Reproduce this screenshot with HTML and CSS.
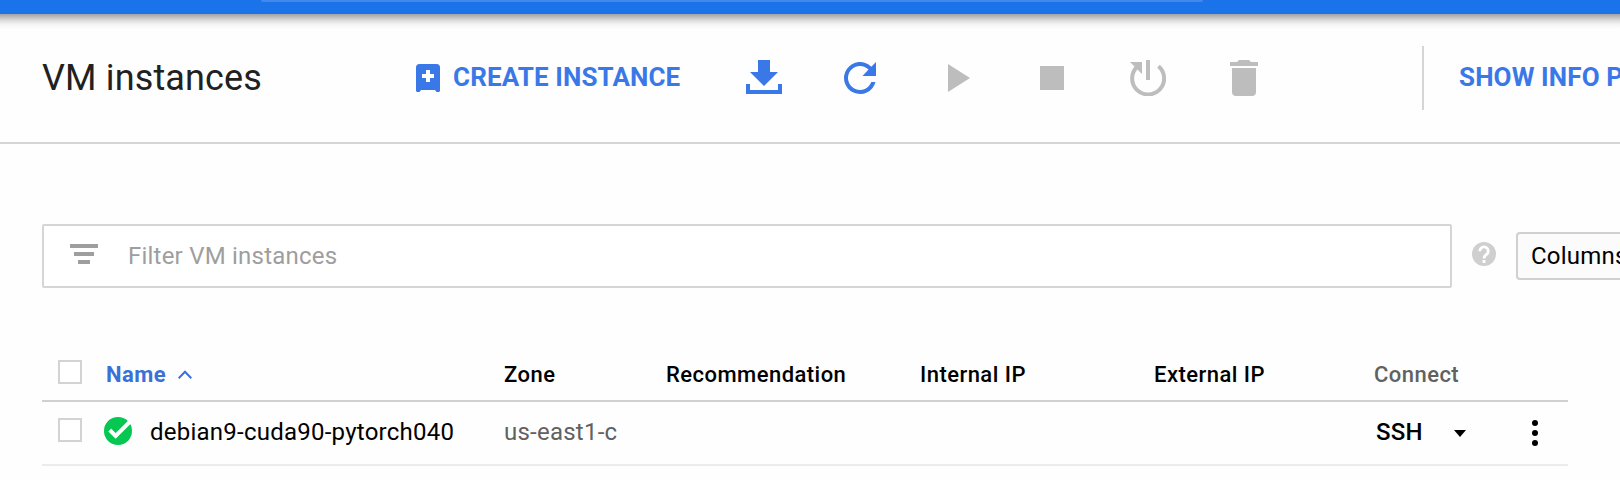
FILE: index.html
```
<!DOCTYPE html>
<html lang="en">
<head>
<meta charset="utf-8">
<title>VM instances</title>
<link rel="stylesheet" href="styles.css">
</head>
<body>
<div class="topbar"><div class="search"></div></div>
<header class="toolbar">
  <h1 class="title">VM instances</h1>
  <button class="create">
    <svg class="create-icon" viewBox="0 0 24 28"><path fill="currentColor" fill-rule="evenodd" d="M3.500 0h17A3.500 3.500 0 0 1 24 3.500V26.500a1.500 1.500 0 0 1-1.500 1.500h-2L19 26H5l-1.500 2h-2A1.500 1.500 0 0 1 0 26.500V3.500A3.500 3.500 0 0 1 3.500 0zM10 6v4H6v4h4v4h4v-4h4v-4h-4V6z"/></svg>
    <span class="create-text">CREATE INSTANCE</span>
  </button>
  <nav class="actions">
    <svg class="icon blue" viewBox="0 0 36 36"><path d="M12 0h12v12h8L18 26 4 12h8zM0 24h4v6h28v-6h4v10H0z"/></svg>
    <svg class="icon blue" viewBox="0 0 36 36"><path d="M29.300 6.700A16 16 0 1 0 33.500 22h-4.200A12 12 0 1 1 26.500 9.500L20.500 16H34V2z"/></svg>
    <svg class="icon grey" viewBox="0 0 36 36"><path d="M10 4v28l22-14z"/></svg>
    <svg class="icon grey" viewBox="0 0 36 36"><path d="M6 6h24v24H6z"/></svg>
    <svg class="icon" viewBox="0 0 36 36"><path fill="#bdbdbd" d="M16 0h4v20h-4zM0 2h12v12z"/><path fill="none" stroke="#bdbdbd" stroke-width="4" d="M7.500 6.500A16 16 0 1 0 28.500 6.300"/></svg>
    <svg class="icon grey" viewBox="0 0 36 36"><path d="M4 2h7l2-2h10l2 2h7v4H4zM6 8h24v24a4 4 0 0 1-4 4H10a4 4 0 0 1-4-4z"/></svg>
  </nav>
  <div class="info"><span class="info-text">SHOW INFO PANEL</span></div>
</header>
<main class="content">
  <div class="filter-row">
    <div class="filter">
      <svg class="filter-icon" viewBox="0 0 28 20"><path fill="#9e9e9e" d="M0 0h28v4H0zM4 8h20v4H4zM8 16h12v4H8z"/></svg>
      <span class="placeholder">Filter VM instances</span>
    </div>
    <svg class="help" viewBox="0 0 24 24"><circle cx="12" cy="12" r="12" fill="#cfcfcf"/><path fill="none" stroke="#fff" stroke-width="2.900" d="M7.800 9.300a4.200 4.200 0 1 1 6.800 3.100C13 13.600 12 14.100 12 16.500"/><path fill="#fff" d="M10.500 18h3v3h-3z"/></svg>
    <button class="columns">Columns</button>
  </div>
  <section class="table">
    <div class="row head">
      <span class="check"></span>
      <span class="name-head"><span class="name-label">Name</span><svg class="sort" viewBox="0 0 14 9"><path fill="none" stroke="#3b70d6" stroke-width="2" d="M.7 8.200 7 1.700l6.300 6.500"/></svg></span>
      <span>Zone</span><span>Recommendation</span><span>Internal IP</span><span>External IP</span><span class="connect">Connect</span>
    </div>
    <div class="row item">
      <span class="check"></span>
      <span class="vm">
        <svg class="status" viewBox="0 0 28 28"><circle cx="14" cy="14" r="14" fill="#05c751"/><path fill="none" stroke="#fff" stroke-width="4" d="m5.700 13 6 6L25.500 5.200"/></svg>
        <span class="vm-name">debian9-cuda90-pytorch040</span>
      </span>
      <span class="zone">us-east1-c</span><span></span><span></span><span></span>
      <span class="ssh"><span class="ssh-text">SSH</span><svg class="caret" viewBox="0 0 12 7"><path d="M0 0h12L6 7z"/></svg><svg class="more" viewBox="0 0 6 26"><circle cx="3" cy="3" r="3"/><circle cx="3" cy="13" r="3"/><circle cx="3" cy="23" r="3"/></svg></span>
    </div>
  </section>
</main>
</body>
</html>
```
FILE: styles.css
```
* { box-sizing: border-box; }
body { margin: 0; height: 480px; overflow: hidden; background: #fefefe; color: #000; font-family: Roboto, sans-serif; }
svg { display: block; flex: none; }
button { font: inherit; border: 0; padding: 0; background: none; }
.topbar { height: 14px; background: #1a73e8; padding-left: 261px; }
.search { width: 942px; height: 2px; background: #4389ec; border-radius: 0 0 3px 3px; }
.toolbar { height: 130px; border-bottom: 2px solid #d5d5d5; display: flex; align-items: center; padding-left: 42px; white-space: nowrap; background: linear-gradient(#a2a2a2 0, #bdbdbd 3px, #e0e0e0 7px, #f6f6f6 11px, #fefefe 15px); }
.toolbar > * { flex: none; }
.title { margin: 0; width: 374px; font-size: 36px; line-height: 42px; font-weight: 400; color: #212121; letter-spacing: .15px; }
.create { display: flex; align-items: center; gap: 13px; width: 330px; color: #3b78e7; }
.create-icon { width: 24px; height: 28px; }
.create-text { font-size: 26px; line-height: 30px; font-weight: 700; margin-top: -2px; letter-spacing: .12px; }
.actions { display: flex; gap: 60px; width: 676px; }
.icon { width: 36px; height: 36px; }
.blue { fill: #3b78e7; }
.grey { fill: #bdbdbd; }
.info { height: 64px; border-left: 2px solid #d5d5d5; padding-left: 35px; display: flex; align-items: center; color: #3b78e7; font-size: 26px; font-weight: 700; letter-spacing: .12px; }
.info-text { margin-top: -2px; }
.content { padding: 80px 0 0 42px; }
.filter-row { display: flex; align-items: center; height: 64px; font-size: 24px; letter-spacing: .22px; }
.filter { width: 1410px; height: 64px; border: 2px solid #d5d5d5; border-radius: 2px; display: flex; align-items: center; padding-left: 26px; gap: 30px; color: #9e9e9e; flex: none; background: #fff; }
.filter-icon { width: 28px; height: 20px; margin-top: -4px; }
.help { width: 24px; height: 24px; margin: -4px 20px 0; }
.columns { width: 160px; height: 48px; flex: none; border: 2px solid #d0d0d0; border-radius: 4px; background: #fbfbfb; text-align: left; padding-left: 13px; letter-spacing: .22px; }
.table { width: 1526px; margin-top: 56px; }
.row { display: grid; grid-template-columns: 46px 416px 162px 254px 234px 220px 194px; align-items: center; white-space: nowrap; }
.head { height: 58px; border-bottom: 2px solid #d0d0d0; font-size: 22px; font-weight: 500; padding-top: 4px; letter-spacing: .46px; }
.item { height: 64px; border-bottom: 2px solid #ececec; font-size: 24px; letter-spacing: .24px; padding-bottom: 2px; }
.check { width: 24px; height: 24px; border: 2px solid #d3d3d3; background: #fff; margin-left: 16px; }
.head .check { margin-top: -5px; }
.item .check { margin-top: -4px; }
.name-head { display: flex; align-items: center; gap: 12px; padding-left: 18px; color: #3b70d6; }
.name-label { font-weight: 700; }
.sort { width: 14px; height: 9px; }
.connect { color: #616161; }
.vm { display: flex; align-items: center; gap: 18px; padding-left: 16px; }
.status { width: 28px; height: 28px; margin-top: -3px; }
.zone { color: #616161; }
.ssh { display: flex; align-items: center; padding-left: 2px; font-weight: 500; }
.ssh-text { width: 78px; }
.caret { width: 12px; height: 7px; margin-top: 3px; }
.more { width: 6px; height: 26px; margin: 2px 0 0 66px; }
```
